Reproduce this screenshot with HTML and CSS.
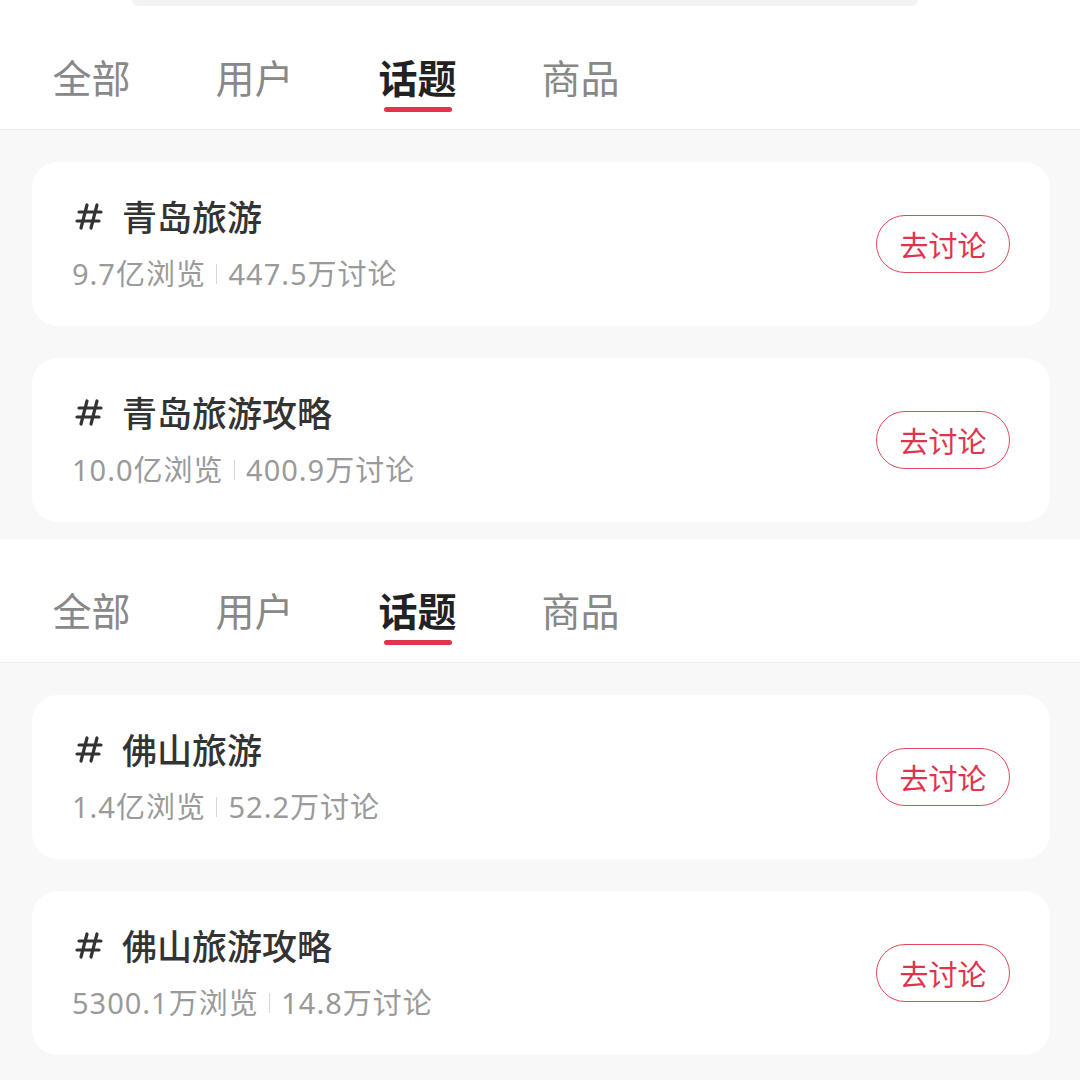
FILE: index.html
```html
<!DOCTYPE html>
<html lang="zh-CN">
<head>
  <meta charset="UTF-8" />
  <meta name="viewport" content="width=device-width, initial-scale=1.0"/>
  <title>话题搜索</title>
  <link rel="stylesheet" href="styles.css">
</head>
<body>
  <div class="top">
    <div class="search-tail"></div>
  </div>

  <section class="panel">
    <nav class="tabs">
      <div class="tab">全部</div>
      <div class="tab">用户</div>
      <div class="tab active">话题<span class="bar"></span></div>
      <div class="tab">商品</div>
    </nav>
    <div class="list first">
      <div class="card">
        <div class="info">
          <div class="title"><svg class="hash" viewBox="0 0 28 28"><path d="M12 3 L6 26 M22 3 L16 26 M4 10 H26 M2 19 H24"/></svg>青岛旅游</div>
          <div class="meta">9.7亿浏览<i class="sep"></i>447.5万讨论</div>
        </div>
        <button class="go">去讨论</button>
      </div>
      <div class="card">
        <div class="info">
          <div class="title"><svg class="hash" viewBox="0 0 28 28"><path d="M12 3 L6 26 M22 3 L16 26 M4 10 H26 M2 19 H24"/></svg>青岛旅游攻略</div>
          <div class="meta">10.0亿浏览<i class="sep"></i>400.9万讨论</div>
        </div>
        <button class="go">去讨论</button>
      </div>
    </div>
  </section>

  <section class="panel">
    <nav class="tabs">
      <div class="tab">全部</div>
      <div class="tab">用户</div>
      <div class="tab active">话题<span class="bar"></span></div>
      <div class="tab">商品</div>
    </nav>
    <div class="list">
      <div class="card">
        <div class="info">
          <div class="title"><svg class="hash" viewBox="0 0 28 28"><path d="M12 3 L6 26 M22 3 L16 26 M4 10 H26 M2 19 H24"/></svg>佛山旅游</div>
          <div class="meta">1.4亿浏览<i class="sep"></i>52.2万讨论</div>
        </div>
        <button class="go">去讨论</button>
      </div>
      <div class="card">
        <div class="info">
          <div class="title"><svg class="hash" viewBox="0 0 28 28"><path d="M12 3 L6 26 M22 3 L16 26 M4 10 H26 M2 19 H24"/></svg>佛山旅游攻略</div>
          <div class="meta">5300.1万浏览<i class="sep"></i>14.8万讨论</div>
        </div>
        <button class="go">去讨论</button>
      </div>
    </div>
  </section>
</body>
</html>
```

FILE: styles.css
```css
body {
  margin: 0;
  background: #f8f8f8;
  font-family: "Noto Sans CJK SC", "Noto Sans", sans-serif;
  width: 1080px;
  height: 1080px;
  overflow: hidden;
}

.top {
  background: #fff;
}

.search-tail {
  height: 6px;
  margin: 0 162px 0 132px;
  background: #f3f3f3;
  border-radius: 0 0 14px 14px;
}

.panel {
  background: #f8f8f8;
}

.tabs {
  height: 124px;
  box-sizing: border-box;
  background: #fff;
  border-bottom: 1px solid #ececec;
  display: flex;
  gap: 84px;
  padding: 46px 0 0 52px;
}

.tab {
  display: flex;
  flex-direction: column;
  align-items: center;
  font-size: 39px;
  line-height: 48px;
  color: #888;
  width: 79px;
}

.tab.active {
  color: #222;
  font-weight: 700;
}

.bar {
  display: block;
  width: 68px;
  height: 5px;
  border-radius: 3px;
  background: #e1334c;
  margin-top: 7px;
}

.list {
  display: flex;
  flex-direction: column;
  gap: 32px;
  padding: 32px 30px 17px 32px;
}

.card {
  height: 164px;
  box-sizing: border-box;
  background: #fff;
  border-radius: 26px;
  display: flex;
  align-items: center;
  justify-content: space-between;
  padding: 0 40px 0 43px;
}

.title {
  display: flex;
  align-items: center;
  font-size: 35px;
  line-height: 40px;
  font-weight: 500;
  color: #333;
}

.hash {
  width: 28px;
  height: 28px;
  margin-right: 19px;
  fill: none;
  stroke: #333;
  stroke-width: 3.2;
  stroke-linecap: round;
}

.meta {
  display: flex;
  align-items: center;
  margin-top: 20px;
  margin-left: -3px;
  font-family: "Noto Sans", "Noto Sans CJK SC", sans-serif;
  font-size: 29px;
  line-height: 36px;
  letter-spacing: 1px;
  color: #9a9a9a;
}

.sep {
  display: inline-block;
  width: 1.5px;
  height: 20px;
  background: #d6d6d6;
  margin: 0 11px 0 10px;
}

.go {
  width: 134px;
  height: 58px;
  border: 1.5px solid #e2485e;
  border-radius: 29px;
  background: #fff;
  color: #e1334c;
  font-family: inherit;
  font-size: 29px;
  padding: 0;
}
```
